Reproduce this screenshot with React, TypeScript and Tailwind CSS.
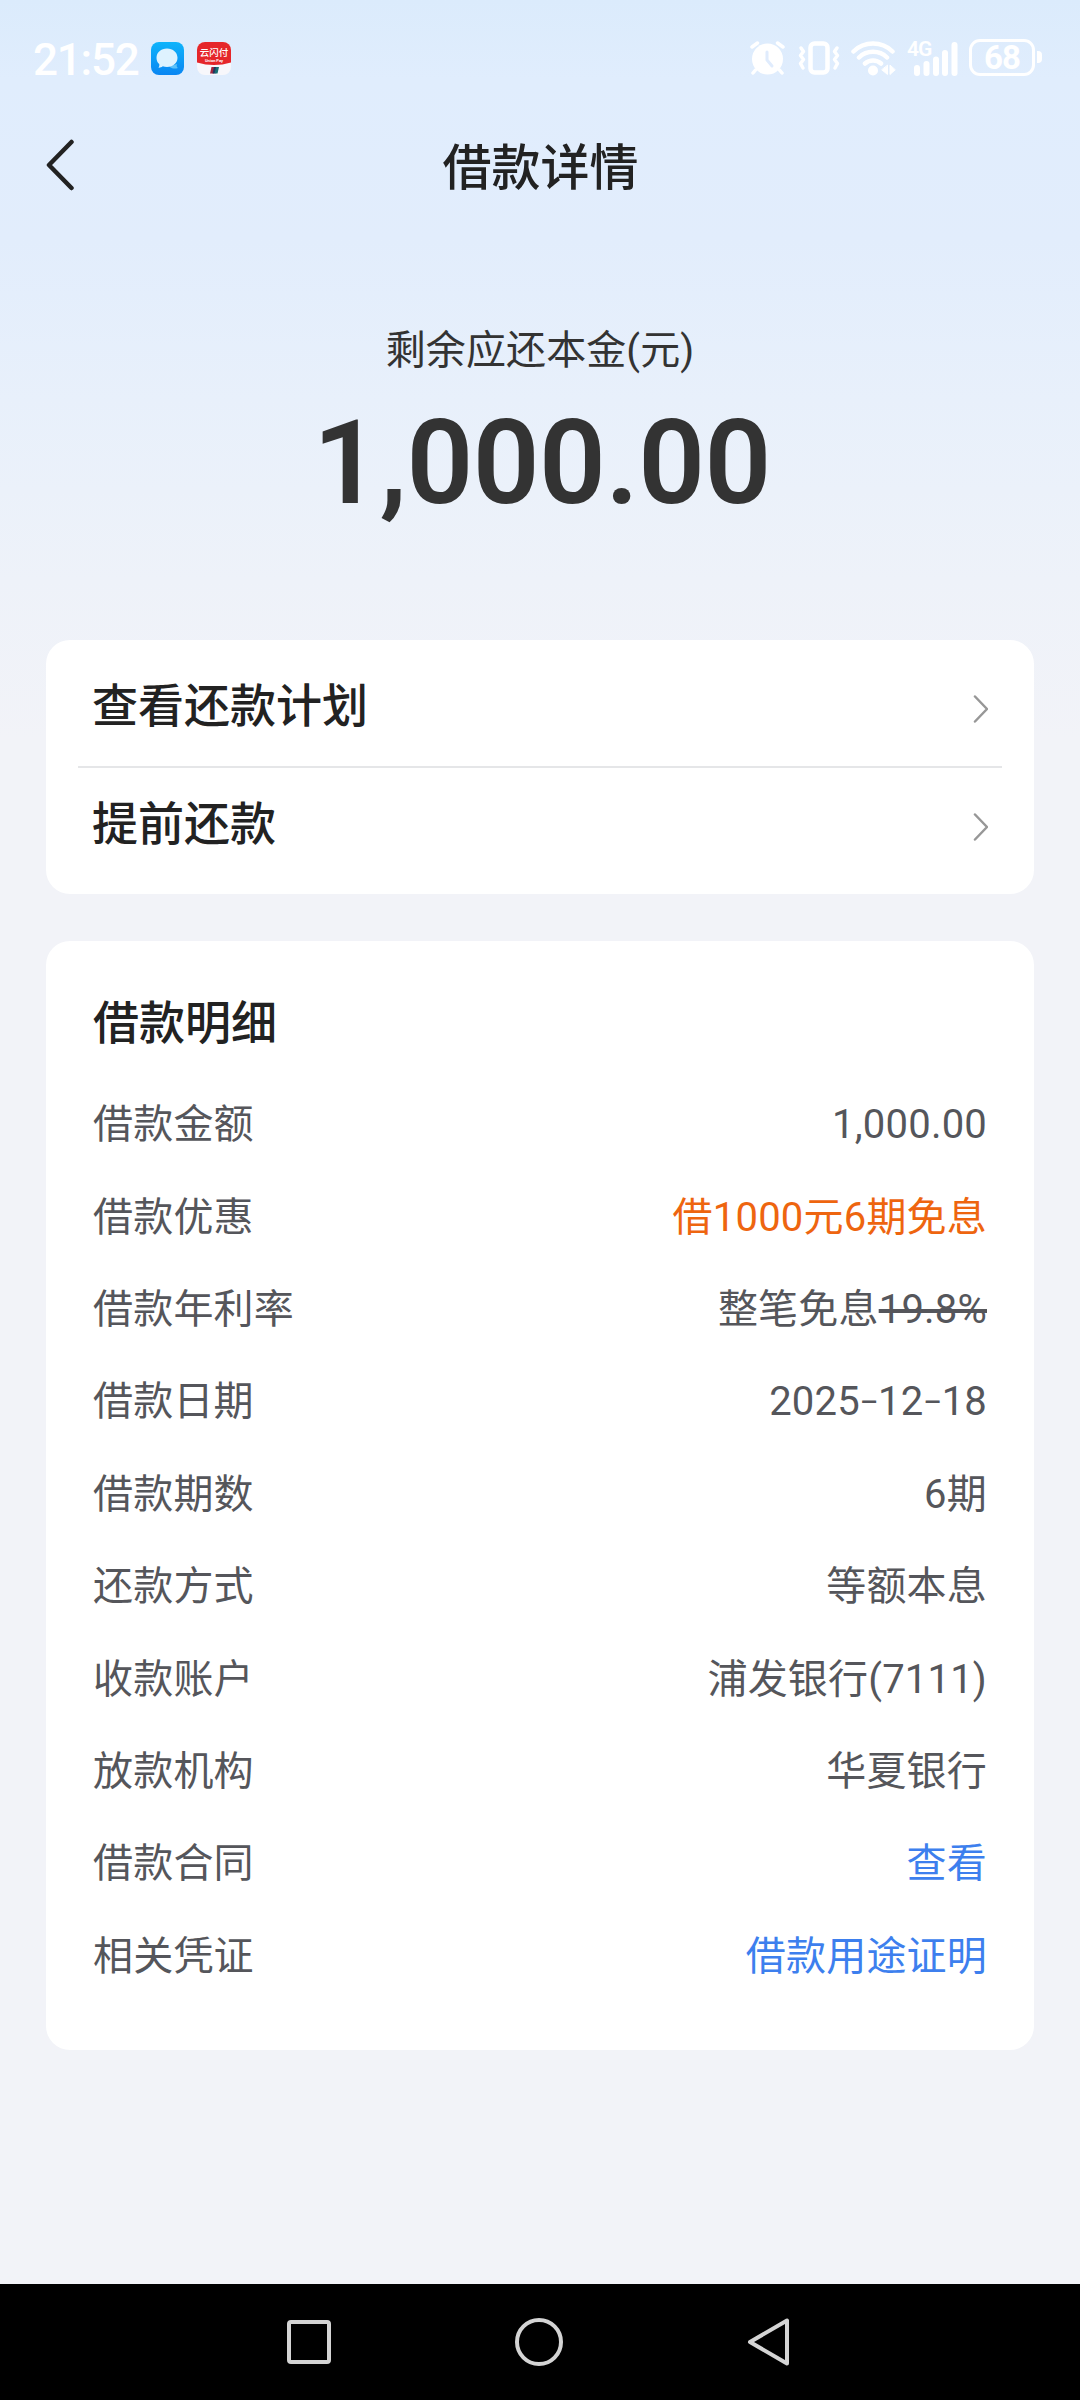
import React from 'react';

type Row = {
  label: string;
  value: React.ReactNode;
  color?: string;
};

// short dash between the date parts
const Dash = () => <span className="align-[3px] text-[28px] font-medium">–</span>;

const rows: Row[] = [
  { label: '借款金额', value: '1,000.00' },
  { label: '借款优惠', value: '借1000元6期免息', color: 'text-[#ee650f]' },
  {
    label: '借款年利率',
    value: (
      <>
        整笔免息<span className="line-through decoration-[4px]">19.8%</span>
      </>
    ),
  },
  { label: '借款日期', value: <>2025<Dash />12<Dash />18</> },
  { label: '借款期数', value: '6期' },
  { label: '还款方式', value: '等额本息' },
  { label: '收款账户', value: '浦发银行(7111)' },
  { label: '放款机构', value: '华夏银行' },
  { label: '借款合同', value: '查看', color: 'text-[#3d7fee]' },
  { label: '相关凭证', value: '借款用途证明', color: 'text-[#3d7fee]' },
];

const ChatAppIcon = () => (
  <svg className="w-[33px] h-[33px]" viewBox="0 0 33 33">
    <defs>
      <linearGradient id="chat" x1="0" y1="0" x2="0" y2="1">
        <stop offset="0" stopColor="#0fb4fb" />
        <stop offset="1" stopColor="#0a86f2" />
      </linearGradient>
    </defs>
    <rect width="33" height="33" rx="8" fill="url(#chat)" />
    <path d="M18 24.500c4 2.500 6 2.500 9 1.500-1.500-1-1.500-2-1-4z" fill="#5cc1fa" />
    <path d="M16 6.500c6 0 10.500 4 10.500 9.300S22 25 16 25c-1.600 0-3-.2-4.200-.7-1.500 1.200-2.800 1.500-4.300 1.400.8-1 1-2.200.7-3.600C6.300 20.500 5.500 18.300 5.500 15.800 5.500 10.500 10 6.500 16 6.500z" fill="#def2fe" />
  </svg>
);

const UnionPayIcon = () => (
  <svg className="w-[34px] h-[33px]" viewBox="0 0 34 33">
    <defs>
      <clipPath id="pay">
        <rect width="34" height="33" rx="8" />
      </clipPath>
    </defs>
    <g clipPath="url(#pay)">
      <rect width="34" height="33" fill="#f7f7fb" />
      <path d="M0 0h34v20.500q-17 5-34 0z" fill="#e5262a" />
      <path d="M14.500 25h4l-1.500 6.500h-4z" fill="#a2283f" />
      <path d="M17 25h3l-1.500 6.500h-3z" fill="#22355f" />
      <path d="M19 25h3l-1.500 6.500h-3z" fill="#176e72" />
    </g>
    <text x="17" y="13.500" textAnchor="middle" fontSize="9.500" fill="#fff" fontFamily="Noto Sans CJK SC" fontWeight="500">云闪付</text>
    <text x="17" y="19.500" textAnchor="middle" fontSize="4" fill="#fff" fontFamily="Roboto" fontWeight="700">Union Pay</text>
  </svg>
);

const AlarmIcon = () => (
  <svg className="w-9 h-[34px]" viewBox="0 0 36 34" fill="none" strokeLinecap="round">
    <circle cx="17.500" cy="18" r="15.500" fill="#fff" />
    <path d="M2 6 7.500 2M33 6 27.500 2M5.500 29 3 32M29.500 29l2.500 3" stroke="#fff" strokeWidth="3.500" />
    <path d="M17 11v8l5 6" stroke="#e0ecfd" strokeWidth="3" />
  </svg>
);

const VibrateIcon = () => (
  <svg className="w-[43px] h-[34px]" viewBox="0 0 43 34" fill="none" stroke="#fff" strokeLinecap="round" strokeLinejoin="round">
    <rect x="12.500" y="2.500" width="17" height="29" rx="4" strokeWidth="4.500" />
    <path d="M3 7l2.500 3.500-3 4 3 4-3 4L5 27M39 7l-2.500 3.500 3 4-3 4 3 4L37 27" strokeWidth="3.500" />
  </svg>
);

const WifiIcon = () => (
  <svg className="w-[45px] h-[35px]" viewBox="0 0 45 35" fill="none" stroke="#fff" strokeLinecap="round">
    <path d="M2.500 10.500a28 28 0 0 1 39 0M8 16.500a20 20 0 0 1 28 0M14 22.500a12 12 0 0 1 16 0" strokeWidth="4.500" />
    <circle cx="22" cy="29.500" r="5" fill="#fff" stroke="none" />
    <path d="M36.500 24.500v9l-5.500-4.500zM39 24.500v9l5-4.500z" fill="#fff" stroke="#fff" strokeWidth="1" strokeLinejoin="round" />
  </svg>
);

const SignalIcon = () => (
  <div className="relative">
    <svg className="w-[52px] h-[36px]" viewBox="0 0 52 36" fill="#fff">
      <rect x="7" y="24" width="6" height="11" rx="3" />
      <rect x="16.500" y="20" width="6" height="15" rx="3" />
      <rect x="26" y="15.500" width="6" height="19.500" rx="3" />
      <rect x="35" y="9" width="6" height="26" rx="3" />
      <rect x="44.500" y="1" width="6" height="34" rx="3" />
    </svg>
    <span className="absolute -top-[4px] left-0 font-[Roboto,sans-serif] text-[21px] leading-[24px] font-semibold tracking-[-1px]">4G</span>
  </div>
);

const ChevronRight = () => (
  <svg className="mt-[5px] w-4 h-[28px]" viewBox="0 0 16 28" fill="none" stroke="#979797" strokeWidth="2.500" strokeLinecap="round" strokeLinejoin="round">
    <path d="M3 1.500 15 14 3 26.500" />
  </svg>
);

const StatusBar = () => (
  <div className="flex h-[116px] justify-between pl-[33px] pr-[38px] text-white">
    <div className="mt-[42px] flex h-[34px]">
      <span className="w-[118px] whitespace-nowrap font-[Roboto,sans-serif] text-[44px] leading-[36px] font-medium tracking-[-1.2px]">21:52</span>
      <ChatAppIcon />
      <div className="w-[13px]" />
      <UnionPayIcon />
    </div>
    <div className="mt-[41px] flex h-[36px]">
      <AlarmIcon />
      <div className="w-3" />
      <VibrateIcon />
      <div className="w-[10px]" />
      <WifiIcon />
      <div className="w-[11px]" />
      <SignalIcon />
      <div className="ml-[10px] -mt-[2px] flex h-[37px] w-[66px] items-center justify-center rounded-[11px] border-[3px] border-white font-[Roboto,sans-serif] text-[33px] leading-none font-bold tracking-[-1px]">
        68
      </div>
      <div className="mt-[10px] ml-[2px] h-3 w-[5px] rounded-r-[4px] bg-white" />
    </div>
  </div>
);

const Header = () => (
  <header className="flex h-[100px] items-center px-[46px]">
    <svg className="-mt-[3px] h-[54px] w-[30px]" viewBox="0 0 30 54" fill="none" stroke="#222" strokeWidth="4.500" strokeLinecap="round" strokeLinejoin="round">
      <path d="M25.500 4 3 27l22.500 23" />
    </svg>
    <h1 className="flex-1 pt-[5px] pr-[29px] text-center text-[49px] leading-none font-medium text-[#222]">借款详情</h1>
  </header>
);

const Amount = () => (
  <section className="flex h-[424px] flex-col items-center pt-[106px]">
    <p className="text-[40px] leading-[58px] tracking-[0.1px] text-[#333]">剩余应还本金(元)</p>
    <p className="mt-[25px] pl-[4px] font-[Roboto,sans-serif] text-[117px] leading-[116px] font-semibold tracking-[-0.5px] text-[#333]">1,000.00</p>
  </section>
);

const LinkRow = ({ text }: { text: string }) => (
  <div className="flex items-center justify-between px-[14px] text-[46px] leading-[60px] font-medium text-[#222]">
    <span>{text}</span>
    <ChevronRight />
  </div>
);

const NavBar = () => (
  <nav className="flex h-[116px] items-center justify-between bg-black pr-[290px] pl-[287px]">
    <div className="h-[44px] w-[44px] rounded-[4px] border-4 border-[#d4d4d4]" />
    <div className="h-12 w-12 rounded-full border-4 border-[#d4d4d4]" />
    <svg className="w-[44px] h-[50px]" viewBox="0 0 44 50" fill="none" stroke="#d4d4d4" strokeWidth="4" strokeLinejoin="round">
      <path d="M41 3.500v43L4 25z" />
    </svg>
  </nav>
);

export default function App() {
  return (
    <div className="flex h-[2400px] w-[1080px] flex-col bg-[#f2f3f8] font-[Roboto,'Noto_Sans_CJK_SC',sans-serif]">
      <div className="flex-1 bg-[linear-gradient(#dbebfc_0px,#e0edfd_80px,#e2edfc_240px,#e8f0fb_400px,#eef2f9_580px,#f2f3f8_740px)]">
        <StatusBar />
        <Header />
        <Amount />

        <section className="mx-[46px] h-[254px] rounded-3xl bg-white px-8 pt-[36px]">
          <LinkRow text="查看还款计划" />
          <div className="mt-[30px] mb-[26px] h-[2px] bg-[#e5e6e8]" />
          <LinkRow text="提前还款" />
        </section>

        <section className="mx-[46px] mt-[47px] h-[1109px] rounded-3xl bg-white pt-[52px] pr-[47px] pl-[47px]">
          <h2 className="text-[46px] leading-[60px] font-medium text-[#222]">借款明细</h2>
          <dl className="mt-[26px]">
            {rows.map((row) => (
              <div key={row.label} className="flex h-[92.4px] items-center justify-between text-[40px] tracking-[0.2px] text-[#55565b]">
                <dt>{row.label}</dt>
                <dd className={row.color}>{row.value}</dd>
              </div>
            ))}
          </dl>
        </section>
      </div>
      <NavBar />
    </div>
  );
}
